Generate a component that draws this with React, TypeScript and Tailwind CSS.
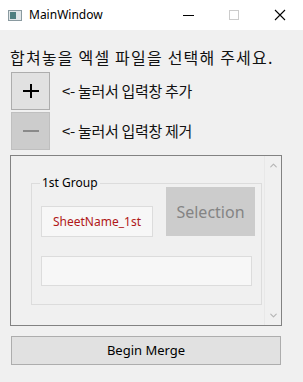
import { ChevronUp, ChevronDown } from 'lucide-react'

const ko = { fontFamily: '"Noto Sans CJK KR", "Noto Sans", sans-serif' }
const ui = { fontFamily: '"Noto Sans", "Liberation Sans", sans-serif' }

function TitleBar() {
  return (
    <div className="flex h-[30px] items-center bg-white">
      <div className="ml-[8px] flex h-[11px] w-[14px] items-center border border-[#8a9aa0] bg-[#dfe6e8] pl-[1px]">
        <div className="h-[7px] w-[6px] bg-[#4d7f80]" />
      </div>
      <span className="ml-[7px] text-[12px] text-black" style={ui}>
        MainWindow
      </span>
      <div className="ml-auto flex items-center">
        <div className="flex w-[46px] justify-center">
          <div className="h-px w-[11px] bg-black" />
        </div>
        <div className="flex w-[46px] justify-center">
          <div className="h-[10px] w-[10px] border border-[#cccccc]" />
        </div>
        <div className="flex w-[46px] justify-center">
          <svg width="12" height="12" viewBox="0 0 12 12">
            <path d="M1 1 L11 11 M11 1 L1 11" stroke="#000" strokeWidth="1.1" />
          </svg>
        </div>
      </div>
    </div>
  )
}

export default function App() {
  return (
    <div className="flex h-[382px] w-[303px] flex-col overflow-hidden bg-[#f0f0f0]">
      <TitleBar />
      <div className="flex flex-col pl-[10px]">
        <p className="mt-[17px] h-[20px] text-[16px] leading-[20px] tracking-[1.2px] text-[#111]" style={ko}>
          합쳐놓을 엑셀 파일을 선택해 주세요.
        </p>

        <div className="mt-[5px] flex items-center">
          <button className="ml-px flex h-[38px] w-[39px] items-center justify-center border border-[#adadad] bg-[#e1e1e1]">
            <svg width="18" height="18" viewBox="0 0 18 18">
              <path d="M9 2 V16 M1 9 H17" stroke="#000" strokeWidth="2" />
            </svg>
          </button>
          <span className="ml-[12px] text-[15px] tracking-[-0.3px] text-[#111]" style={ko}>
            &lt;- 눌러서 입력창 추가
          </span>
        </div>

        <div className="mt-[2px] flex items-center">
          <button className="ml-px flex h-[38px] w-[39px] items-center justify-center border border-[#bfbfbf] bg-[#cccccc]">
            <svg width="18" height="18" viewBox="0 0 18 18">
              <path d="M1 9 H17" stroke="#8a8a8a" strokeWidth="2" />
            </svg>
          </button>
          <span className="ml-[12px] text-[15px] tracking-[-0.3px] text-[#111]" style={ko}>
            &lt;- 눌러서 입력창 제거
          </span>
        </div>

        {/* scroll area */}
        <div className="mt-[5px] flex h-[171px] w-[272px] border border-[#828282]">
          <div className="flex-1 pl-[20px] pt-[27px]">
            <div className="relative h-[122px] w-[231px] border border-[#dcdcdc] pl-[9px] pt-[3px]">
              <span
                className="absolute -top-[9px] left-[8px] bg-[#f0f0f0] px-[2px] text-[12px] leading-[16px] text-black"
                style={ui}
              >
                1st Group
              </span>
              <div className="flex items-start">
                <div
                  className="mt-[19px] flex h-[31px] w-[112px] items-center justify-center border border-[#dcdcdc] bg-[#f7f7f7] text-[12px] text-[#b01818]"
                  style={ui}
                >
                  SheetName_1st
                </div>
                <button
                  className="ml-[13px] flex h-[49px] w-[89px] items-center justify-center bg-[#cccccc] text-[16px] text-[#848484]"
                  style={ui}
                >
                  Selection
                </button>
              </div>
              <div className="mt-[19px] h-[30px] w-[211px] border border-[#dcdcdc] bg-[#f7f7f7]" />
            </div>
          </div>
          <div className="flex w-[17px] flex-col items-center justify-between border-l border-[#e8e8e8] py-[4px]">
            <ChevronUp size={11} strokeWidth={2.5} color="#b5b5b5" />
            <ChevronDown size={11} strokeWidth={2.5} color="#b5b5b5" />
          </div>
        </div>

        <button
          className="ml-px mt-[10px] h-[29px] w-[270px] border border-[#adadad] bg-[#e1e1e1] text-[13px] text-black"
          style={ui}
        >
          Begin Merge
        </button>
      </div>
    </div>
  )
}
